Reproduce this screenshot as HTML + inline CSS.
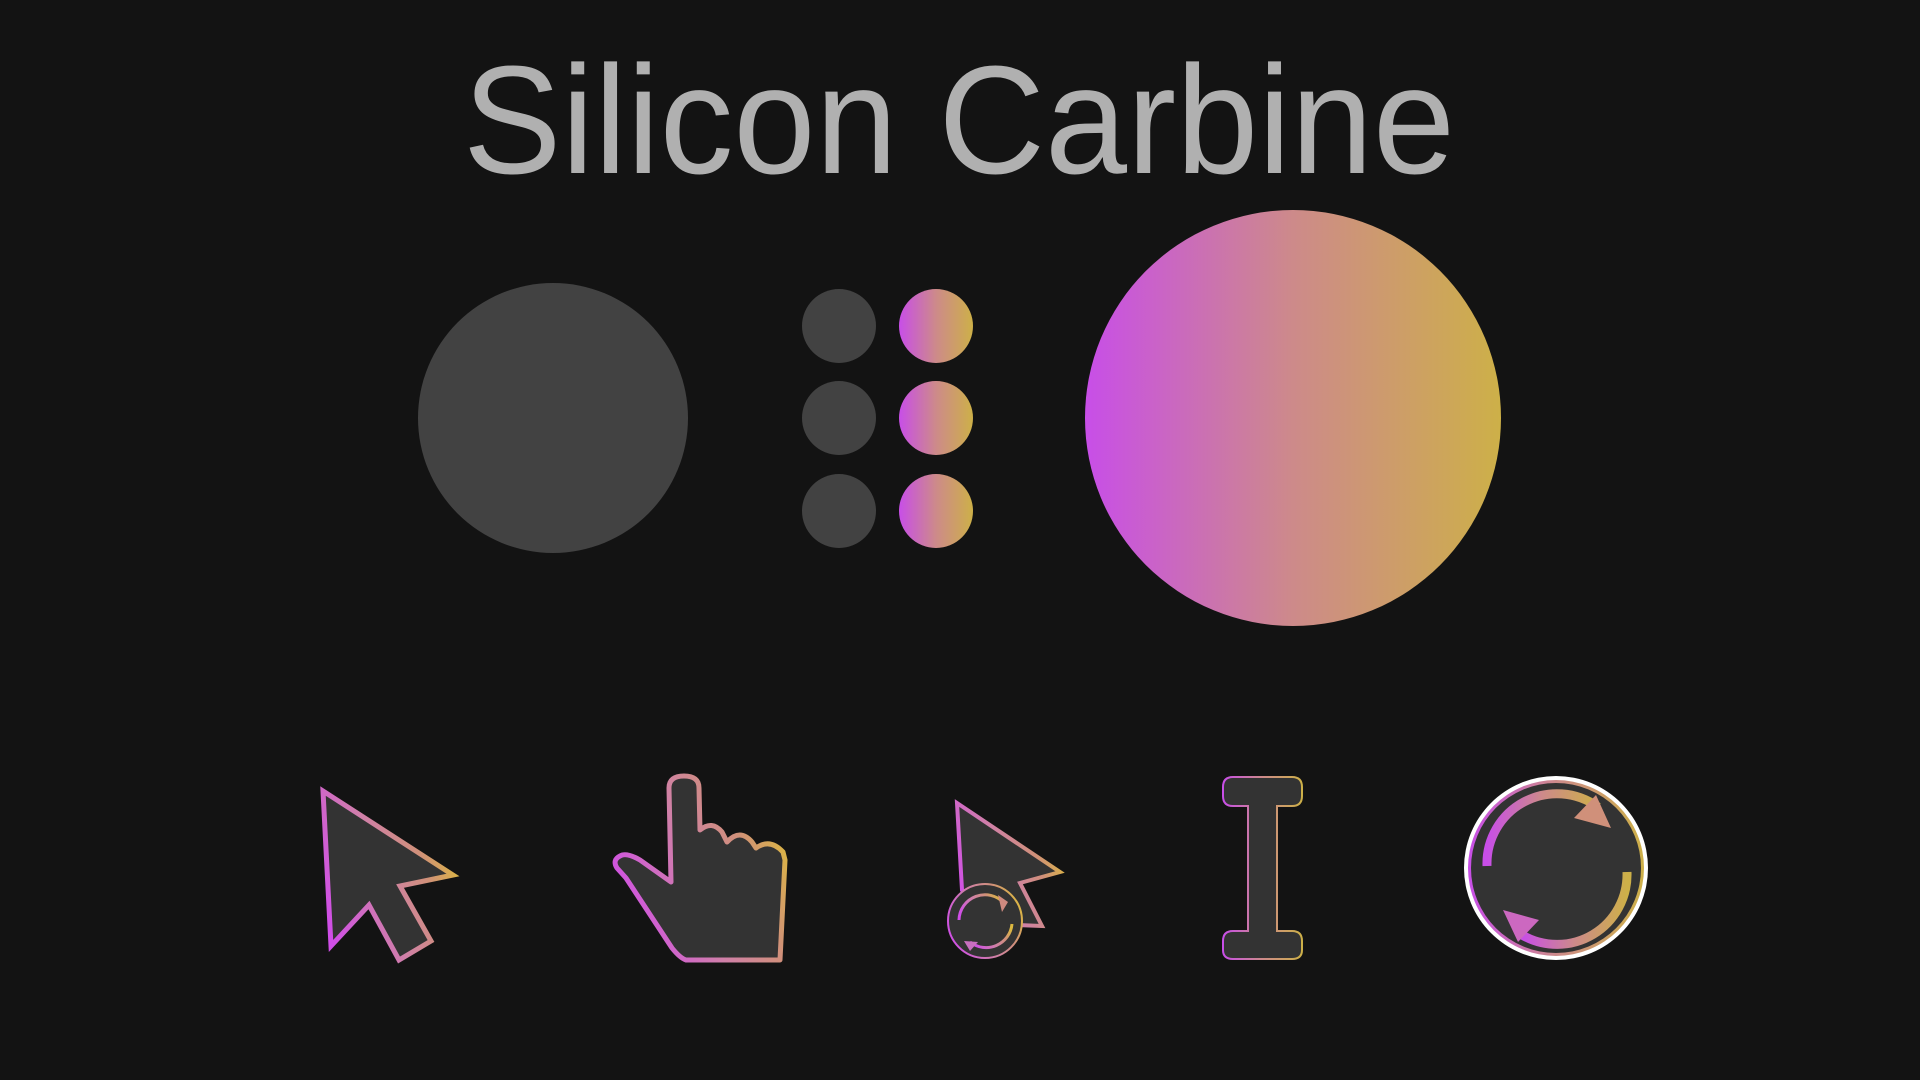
<!DOCTYPE html>
<html><head><meta charset="utf-8"><style>html,body{margin:0;padding:0;background:#131313;overflow:hidden}svg{display:block}</style></head>
<body>
<svg width="1920" height="1080" viewBox="0 0 1920 1080" xmlns="http://www.w3.org/2000/svg">
<defs>
<linearGradient id="g" x1="0" y1="0" x2="1" y2="0"><stop offset="0" stop-color="#c84ee8"/><stop offset="0.5" stop-color="#cd8a8a"/><stop offset="1" stop-color="#cdb048"/></linearGradient>
<linearGradient id="gs" x1="0" y1="0.7" x2="1" y2="0.3"><stop offset="0" stop-color="#d04ee8"/><stop offset="0.45" stop-color="#d080a8"/><stop offset="0.75" stop-color="#d0907a"/><stop offset="1" stop-color="#dcb840"/></linearGradient>
</defs>
<rect width="1920" height="1080" fill="#131313"/>
<text x="463" y="173" font-family="Liberation Sans, sans-serif" font-size="154" fill="#b0b0b0" textLength="992" lengthAdjust="spacingAndGlyphs">Silicon Carbine</text>
<circle cx="553" cy="418" r="135" fill="#424242"/>
<circle cx="839" cy="326" r="37" fill="#424242"/>
<circle cx="839" cy="418" r="37" fill="#424242"/>
<circle cx="839" cy="511" r="37" fill="#424242"/>
<circle cx="936" cy="326" r="37" fill="url(#g)"/>
<circle cx="936" cy="418" r="37" fill="url(#g)"/>
<circle cx="936" cy="511" r="37" fill="url(#g)"/>
<circle cx="1293" cy="418" r="208" fill="url(#g)"/>

<path d="M323 791 L331 946 L369 905 L399 960 L431 941 L400 886 L453 875 Z" fill="#333" stroke="url(#gs)" stroke-width="5" stroke-linejoin="miter"/>

<path d="M669 788 Q669 776 684 776 Q699 776 699 788 L700 830 Q712 820 722 832 L727 842 Q740 828 752 842 L756 848 Q770 838 783 852 L785 860 L780 960 L686 960 Q680 958 672 948 L626 878 L617 868 Q612 860 620 856 Q626 852 640 860 L671 882 Z" fill="#333" stroke="url(#gs)" stroke-width="5" stroke-linejoin="round"/>

<path d="M957 803 L962 890 L1017 925 L1042 926 L1020 883 L1060 872 Z" fill="#333" stroke="url(#gs)" stroke-width="4"/>
<circle cx="985" cy="921" r="37" fill="#333" stroke="url(#gs)" stroke-width="2"/>
<path d="M959 920 A26 26 0 0 1 1004 903" fill="none" stroke="url(#gs)" stroke-width="3"/>
<path d="M998 895 L1008 902 L1002 912 Z" fill="#cf8a80"/>
<path d="M1012 924 A26 26 0 0 1 970 942" fill="none" stroke="url(#gs)" stroke-width="3"/>
<path d="M964 941 L978 942 L970 951 Z" fill="#c870c0"/>

<path d="M1233 777 L1292 777 Q1302 777 1302 787 L1302 796 Q1302 806 1292 806 L1277 806 L1277 931 L1292 931 Q1302 931 1302 941 L1302 950 Q1302 959 1292 959 L1233 959 Q1223 959 1223 950 L1223 941 Q1223 931 1233 931 L1248 931 L1248 806 L1233 806 Q1223 806 1223 796 L1223 787 Q1223 777 1233 777 Z" fill="#333" stroke="url(#g)" stroke-width="2"/>

<circle cx="1556" cy="868" r="92" fill="#fff"/>
<circle cx="1556" cy="868" r="88" fill="url(#g)"/>
<circle cx="1556" cy="868" r="85" fill="#333"/>
<path d="M1487 866 A70 70 0 0 1 1598 807" fill="none" stroke="url(#g)" stroke-width="9"/>
<path d="M1596 795 L1611 828 L1574 818 Z" fill="#d0907a"/>
<path d="M1627 872 A70 70 0 0 1 1522 935" fill="none" stroke="url(#g)" stroke-width="9"/>
<path d="M1503 910 L1539 920 L1518 942 Z" fill="#cc68c0"/>
</svg>
</body></html>
